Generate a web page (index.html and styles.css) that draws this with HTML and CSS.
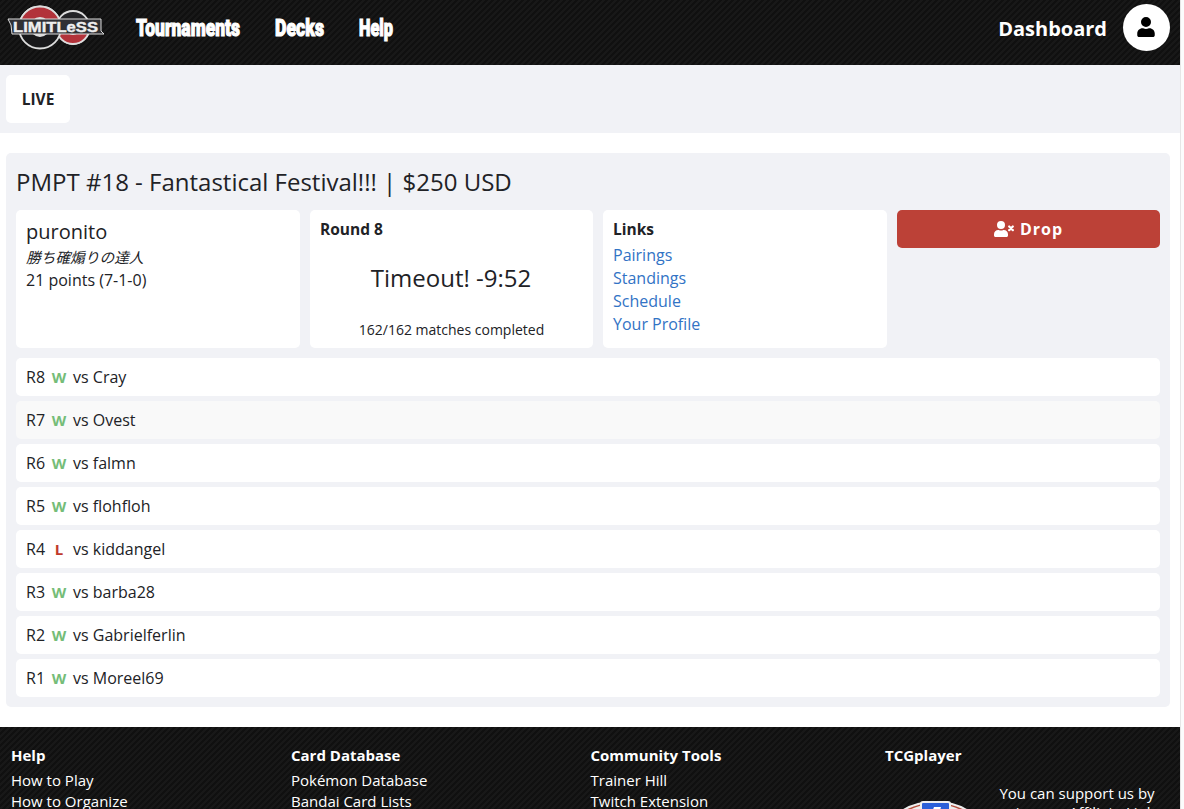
FILE: index.html
```html
<!DOCTYPE html>
<html lang="en">
<head>
    <meta charset="utf-8">
    <title>PMPT #18 - Fantastical Festival!!! | Limitless</title>
    <link rel="stylesheet" href="styles.css">
</head>
<body>
<div class="page">
    <header class="top">
        <svg class="logo" width="100" height="46" viewBox="0 0 100 46">
            <g stroke="#ddd" stroke-width="1.8">
                <circle cx="66" cy="22.500" r="16.500" fill="#242427"/>
                <path d="M49.500 22.500a16.500 16.500 0 0 0 33 0z" fill="#b2323a"/>
                <circle cx="33" cy="22.500" r="21" fill="#19191b"/>
                <path d="M12 22.500a21 21 0 0 1 42 0z" fill="#b2323a"/>
                <circle cx="33" cy="22" r="9" fill="#ddd"/>
                <circle cx="66" cy="22" r="7" fill="#333"/>
            </g>
            <path d="M1 14h93v12l3 3H5l-1-9z" fill="#303034" stroke="#ddd" stroke-width="1"/>
            <text class="logo-text" x="6" y="27" textLength="85" lengthAdjust="spacingAndGlyphs">LIMITLeSS</text>
        </svg>
        <nav class="menu">
            <a href="#"><svg width="108" height="32"><text x="1" y="24" textLength="104" lengthAdjust="spacingAndGlyphs">Tournaments</text></svg></a>
            <a href="#"><svg width="53" height="32"><text x="1" y="24" textLength="49" lengthAdjust="spacingAndGlyphs">Decks</text></svg></a>
            <a href="#"><svg width="39" height="32"><text x="1" y="24" textLength="34" lengthAdjust="spacingAndGlyphs">Help</text></svg></a>
        </nav>
        <a class="dashboard" href="#">Dashboard</a>
        <a class="avatar" href="#">
            <svg width="18" height="20" viewBox="0 0 448 512"><path d="M224 256a128 128 0 1 0 0-256 128 128 0 0 0 0 256zm89.600 32h-16.700a174 174 0 0 1-145.800 0h-16.700C60.200 288 0 348.200 0 422.400V464c0 26.500 21.500 48 48 48h352c26.500 0 48-21.500 48-48v-41.600c0-74.200-60.200-134.400-134.400-134.400z"/></svg>
        </a>
    </header>

    <div class="subnav"><a class="live" href="#">LIVE</a></div>

    <main class="tournament">
        <h1>PMPT #18 - Fantastical Festival!!! | $250 USD</h1>
        <div class="panels">
            <div class="panel">
                <div class="player">puronito</div>
                <div class="deck" lang="ja">勝ち確煽りの達人</div>
                <div>21 points (7-1-0)</div>
            </div>
            <div class="panel round">
                <div class="heading">Round 8</div>
                <div class="timer">Timeout! -9:52</div>
                <div class="completed">162/162 matches completed</div>
            </div>
            <div class="panel links">
                <div class="heading">Links</div>
                <a href="#">Pairings</a>
                <a href="#">Standings</a>
                <a href="#">Schedule</a>
                <a href="#">Your Profile</a>
            </div>
            <button class="drop">
                <svg width="20" height="16" viewBox="0 0 640 512"><path fill="#fff" d="M224 256a128 128 0 1 0 0-256 128 128 0 0 0 0 256zm89.600 32h-16.700a174 174 0 0 1-145.800 0h-16.700C60.200 288 0 348.200 0 422.400V464c0 26.500 21.500 48 48 48h352c26.500 0 48-21.500 48-48v-41.600c0-74.200-60.200-134.400-134.400-134.400z"/><path stroke="#fff" stroke-width="70" stroke-linecap="round" d="M486 176l116 116M602 176L486 292"/></svg>
                Drop
            </button>
        </div>

        <div class="matches">
            <div class="match"><span>R8</span><b class="win">W</b><span>vs Cray</span></div>
            <div class="match hover"><span>R7</span><b class="win">W</b><span>vs Ovest</span></div>
            <div class="match"><span>R6</span><b class="win">W</b><span>vs falmn</span></div>
            <div class="match"><span>R5</span><b class="win">W</b><span>vs flohfloh</span></div>
            <div class="match"><span>R4</span><b class="loss">L</b><span>vs kiddangel</span></div>
            <div class="match"><span>R3</span><b class="win">W</b><span>vs barba28</span></div>
            <div class="match"><span>R2</span><b class="win">W</b><span>vs Gabrielferlin</span></div>
            <div class="match"><span>R1</span><b class="win">W</b><span>vs Moreel69</span></div>
        </div>
    </main>

    <footer class="footer">
        <div class="col">
            <h2>Help</h2>
            <a href="#">How to Play</a>
            <a href="#">How to Organize</a>
        </div>
        <div class="col">
            <h2>Card Database</h2>
            <a href="#">Pokémon Database</a>
            <a href="#">Bandai Card Lists</a>
        </div>
        <div class="col">
            <h2>Community Tools</h2>
            <a href="#">Trainer Hill</a>
            <a href="#">Twitch Extension</a>
        </div>
        <div class="col">
            <h2>TCGplayer</h2>
            <div class="partner">
                <svg width="100" height="60" viewBox="0 0 100 60">
                    <ellipse cx="50" cy="50" rx="47" ry="31" fill="#b5523f" stroke="#eee" stroke-width="2"/>
                    <ellipse cx="50" cy="50" rx="42" ry="29" fill="#eee"/>
                    <rect x="36" y="19" width="29" height="40" rx="2" fill="#2b5fd9" stroke="#eee" stroke-width="2"/>
                    <path d="M49 24h7l-2 7h4l-9 18 1-12h-6z" fill="#fff"/>
                </svg>
                <p>You can support us by using our Affiliate Link</p>
            </div>
        </div>
    </footer>
</div>
</body>
</html>
```
FILE: styles.css
```css
* {
    box-sizing: border-box;
}

body {
    margin: 0;
    height: 809px;
    overflow: hidden;
    background: #fcfcfc;
    color: #212226;
    font: 16px/23px "Open Sans", "Noto Sans CJK JP", sans-serif;
}

a {
    color: inherit;
    text-decoration: none;
}

.page {
    width: 1181px;
    height: 809px;
    overflow: hidden;
    background: #fff;
    border-right: 1px solid #e6e6e6;
}

.top,
.footer {
    background: repeating-linear-gradient(135deg, #101010 0 2.1px, #181818 2.1px 4.24px);
    color: #fff;
}

.top {
    display: flex;
    height: 65px;
    padding: 0 10px 0 7px;
}

.logo {
    margin-top: 5px;
}

.logo-text {
    font: bold 15px "Liberation Sans", sans-serif;
    fill: #eee;
    stroke: #eee;
    stroke-width: 0.4px;
}

.menu {
    display: flex;
    gap: 31px;
    margin: 12px auto 0 28px;
}

.menu svg {
    display: block;
    overflow: visible;
}

.menu text {
    font: 900 23px Roboto, sans-serif;
    fill: #fff;
    stroke: #fff;
    stroke-width: 1.1px;
}

.dashboard {
    margin: 15px 16px 0 0;
    font-size: 20px;
    line-height: 28px;
    font-weight: bold;
}

.avatar {
    display: flex;
    align-items: center;
    justify-content: center;
    width: 47px;
    height: 47px;
    margin-top: 4px;
    border-radius: 50%;
    background: #fff;
}

.avatar svg {
    margin: 0 1px 2px 0;
}

.subnav {
    height: 68px;
    padding: 10px 6px;
    background: #f1f2f6;
}

.live {
    display: block;
    width: 64px;
    height: 48px;
    border-radius: 5px;
    background: #fff;
    font-size: 15.5px;
    font-weight: bold;
    line-height: 48px;
    text-align: center;
}

.tournament {
    height: 554px;
    margin: 20px 10px 20px 6px;
    padding: 10px;
    border-radius: 5px;
    background: #f1f2f6;
}

h1 {
    margin: 0 0 9px;
    font-size: 24px;
    font-weight: normal;
    line-height: 38px;
}

.panels {
    display: grid;
    grid-template-columns: 284px 283px 284px 263px;
    gap: 10px;
    align-items: start;
}

.panel {
    height: 138px;
    padding: 10px;
    border-radius: 5px;
    background: #fff;
}

.player {
    font-size: 20px;
    line-height: 24px;
}

.deck {
    margin-top: 2px;
    font-size: 14.7px;
    font-style: italic;
}

.heading {
    height: 24px;
    font-size: 15.5px;
    line-height: 19px;
    font-weight: bold;
}

.round {
    display: flex;
    flex-direction: column;
}

.timer {
    margin: 15px 1px auto 0;
    font-size: 24px;
    line-height: 38px;
    text-align: center;
}

.completed {
    margin-bottom: -3px;
    font-size: 14px;
    text-align: center;
}

.links a {
    display: block;
    color: #3273c5;
}

.drop {
    display: flex;
    align-items: center;
    justify-content: center;
    gap: 6px;
    height: 38px;
    padding: 0;
    border: 0;
    border-radius: 5px;
    background: #bc4137;
    color: #fff;
    font-family: inherit;
    font-size: 16px;
    font-weight: bold;
    letter-spacing: 1px;
}

.matches {
    display: grid;
    gap: 5px;
    margin-top: 10px;
}

.match {
    display: flex;
    height: 38px;
    padding-left: 10px;
    border-radius: 5px;
    background: #fff;
    line-height: 38px;
}

.hover {
    background: #f9f9f9;
}

.match b {
    width: 28px;
    font-size: 15px;
    text-align: center;
}

.win {
    color: #75bd78;
}

.loss {
    color: #c0392b;
}

.footer {
    display: grid;
    grid-template-columns: 280px 299.500px 294.500px 1fr;
    height: 82px;
    padding: 18px 10px 0 11px;
    overflow: hidden;
    font-size: 15px;
    line-height: 21px;
}

.footer h2 {
    margin: 0 0 4px;
    font-size: 15px;
    line-height: 21px;
}

.footer a {
    display: block;
}

.partner {
    display: flex;
    gap: 10px;
    margin-top: 17px;
}

.partner svg {
    flex: none;
}

.partner p {
    width: 164px;
    margin: 1px 0 0;
    line-height: 19px;
    text-align: center;
}
```
